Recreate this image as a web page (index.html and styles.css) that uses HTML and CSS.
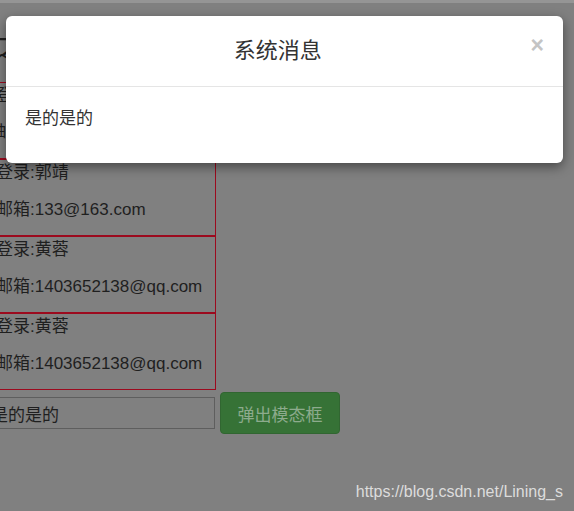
FILE: index.html
```html
<!DOCTYPE html>
<html lang="zh-CN">
<head>
<meta charset="utf-8">
<title>模态框</title>
<link rel="stylesheet" href="styles.css">
</head>
<body>
<div class="page">
  <h2 class="heading">之用户列表</h2>
  <div class="list">
    <div class="box"><p>登录:张三</p><p>邮箱:123@163.com</p></div>
    <div class="box"><p>登录:郭靖</p><p>邮箱:133@163.com</p></div>
    <div class="box"><p>登录:黄蓉</p><p>邮箱:1403652138@qq.com</p></div>
    <div class="box"><p>登录:黄蓉</p><p>邮箱:1403652138@qq.com</p></div>
  </div>
  <div class="form-row">
    <input class="text-input" type="text" value="是的是的">
    <button class="btn-success" type="button">弹出模态框</button>
  </div>
</div>

<div class="modal">
  <div class="modal-header">
    <h4 class="modal-title">系统消息</h4>
    <span class="close">×</span>
  </div>
  <div class="modal-body">是的是的</div>
</div>

<div class="watermark">https://blog.csdn.net/Lining_s</div>
</body>
</html>
```

FILE: styles.css
```css
html, body {
  margin: 0;
  padding: 0;
  overflow: hidden;
}
body {
  width: 574px;
  height: 508px;
  background: #808080;
  border-top: 3px solid #959595;
  font-family: "Liberation Sans", "Noto Sans CJK SC", sans-serif;
  color: #1f1f1f;
  position: relative;
}
.page {
  margin-left: -14px;
}
.heading {
  margin: 24px 0 16px;
  font-size: 30px;
  line-height: 39px;
  font-weight: normal;
  padding-left: 9px;
  white-space: nowrap;
  width: 220px;
  overflow: hidden;
}
.list {
  width: 230px;
}
.box {
  border: 1px solid #9c0a1e;
  padding: 3px 0 15px 9px;
  font-size: 17px;
  line-height: 20px;
}
.box p {
  margin: 0;
  white-space: nowrap;
}
.box p + p {
  margin-top: 17px;
}
.form-row {
  display: flex;
  align-items: center;
  gap: 5px;
  margin-top: 2px;
}
.text-input {
  flex: none;
  box-sizing: border-box;
  width: 229px;
  height: 32px;
  border: 1px solid #5e5e5e;
  background: #808080;
  padding: 0 4px;
  font-family: "Liberation Sans", "Noto Sans CJK SC", sans-serif;
  font-size: 17px;
  color: #1f1f1f;
  outline: none;
}
.btn-success {
  flex: none;
  box-sizing: border-box;
  width: 120px;
  height: 42px;
  border: 1px solid #316631;
  border-radius: 4px;
  background: #367236;
  color: #8dab8d;
  font-family: "Liberation Sans", "Noto Sans CJK SC", sans-serif;
  font-size: 17px;
  padding: 0;
  white-space: nowrap;
}
.modal {
  position: absolute;
  top: 13px;
  left: 6px;
  width: 557px;
  background: #fff;
  border-radius: 6px;
  box-shadow: 0 4px 12px rgba(0, 0, 0, 0.45);
}
.modal-header {
  display: flex;
  align-items: center;
  height: 70px;
  padding: 0 19px;
  border-bottom: 1px solid #e5e5e5;
}
.modal-title {
  flex: 1;
  margin: 0;
  text-align: center;
  font-size: 22px;
  font-weight: normal;
  color: #333;
  line-height: 30px;
}
.close {
  font-size: 23px;
  font-weight: bold;
  color: #c4c4c4;
  line-height: 20px;
  margin-top: -12px;
}
.modal-body {
  padding: 22px 19px 34px;
  font-size: 17px;
  line-height: 20px;
  color: #333;
}
.watermark {
  position: absolute;
  right: 11px;
  bottom: 9px;
  font-size: 16px;
  line-height: 20px;
  color: #dcdcdc;
}
```
